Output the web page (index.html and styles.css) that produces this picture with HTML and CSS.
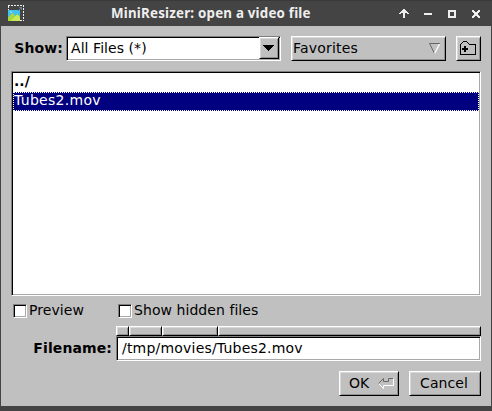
FILE: index.html
```html
<!DOCTYPE html>
<html lang="en">
<head>
<meta charset="utf-8">
<title>MiniResizer: open a video file</title>
<link rel="stylesheet" href="styles.css">
</head>
<body>
<div class="window">
  <header class="titlebar">
    <svg class="app-icon" width="16" height="16" viewBox="0 0 16 16" shape-rendering="crispEdges">
      <path d="M0 .5H16M15.5 0V16M0 .5V5M12 15.5H16" fill="none" stroke="#eee" stroke-dasharray="2 1"/>
      <path fill="#42c0ee" d="M0 5h12v11H0z"/>
      <path fill="#7bd5f5" d="M2 6h2v2H2z"/>
      <path fill="#a9d83c" d="M0 12l4-4 3 3 2-2 3 3v4H0z"/>
      <path fill="#c8ea58" d="M2 16l5-5 2-1 3 3v3z"/>
      <path fill="#607d8b" d="M11 2h3v3h-1V4h-1v1h-1v1h-1V5h1V4h1V3h-1z"/>
    </svg>
    <h1 class="title">MiniResizer: open a video file</h1>
    <svg class="controls" width="82" height="10" viewBox="0 0 82 10" shape-rendering="crispEdges">
      <path fill="#eee" d="M4 0h2v1h1v1h1v1h1v1h1v1H8V4H6v5H4V4H2v1H0V4h1V3h1V2h1V1h1zM25 4h8v2h-8zM49 1h8v8h-8zM73 1h2v1h1v1h2V2h1V1h2v2h-1v1h-1v2h1v1h1v2h-2V8h-1V7h-2v1h-1v1h-2V7h1V6h1V4h-1V3h-1z"/>
      <path fill="#444" d="M51 3h4v4h-4z"/>
    </svg>
  </header>
  <main class="content">
    <div class="toolbar">
      <span class="label show-label">Show:</span>
      <div class="sunken choice">
        <span class="choice-text">All Files (*)</span>
        <span class="drop"><svg width="11" height="6" viewBox="0 0 11 6" shape-rendering="crispEdges"><path d="M0 0h11v1h-1v1H9v1H8v1H7v1H6v1H5V5H4V4H3V3H2V2H1V1H0z"/></svg></span>
      </div>
      <div class="raised favorites">
        <span class="favorites-text">Favorites</span>
        <svg width="11" height="11" viewBox="0 0 11 11"><path d="M11 .5H.5L5.5 10.5" stroke="#666" fill="none"/><path d="M10.5 1L5.6 10.5" stroke="#fff" stroke-width="1.3" fill="none"/></svg>
      </div>
      <div class="raised new-folder">
        <svg width="17" height="15" viewBox="0 0 17 15" shape-rendering="crispEdges"><path d="M0 3h1v11H0zM1 2h1v1H1zM2 1h1v1H2zM3 0h4v1H3zM7 1h1v1H7zM8 2h1v1H8zM9 3h7v11h-1V4H9zM0 13h16v1H0z"/><path d="M4 5h2v2h2v2H6v2H4V9H2V7h2z"/></svg>
      </div>
    </div>
    <div class="sunken list">
      <div class="row parent">../</div>
      <div class="row selected">Tubes2.mov</div>
    </div>
    <div class="options">
      <div class="option preview"><span class="sunken box"></span>Preview</div>
      <div class="option"><span class="sunken box"></span>Show hidden files</div>
    </div>
    <div class="file-row">
      <span class="label file-label">Filename:</span>
      <div class="file-field">
        <div class="crumbs"><i class="crumb root"></i><i class="crumb tmp"></i><i class="crumb movies"></i><i class="crumb rest"></i></div>
        <div class="sunken filename">/tmp/movies/Tubes2.mov</div>
      </div>
    </div>
    <div class="actions">
      <div class="raised button ok">OK
        <svg width="17" height="12" viewBox="0 0 17 12" fill="none"><path d="M.5 5.5L5.5 10.5V7.5H15.5V.5" stroke="#fff"/><path d="M.5 5.5L5.5 .5V3.5H10.5V.5H15" stroke="#666"/></svg>
      </div>
      <div class="raised button cancel">Cancel</div>
    </div>
  </main>
</div>
</body>
</html>
```
FILE: styles.css
```css
* { box-sizing: border-box; }
body { margin: 0; font: 14px/16px "DejaVu Sans", sans-serif; color: #000; }
svg { display: block; flex: none; }
.window { width: 492px; height: 411px; background: #444; padding: 0 1px 5px; border-top: 1px solid #3a3a3a; }
.titlebar { height: 25px; display: flex; align-items: flex-start; padding: 4px 6px 0 7px; }
.title { margin: -1px 0 0 87px; font: bold 13.33px/18px "Noto Sans", sans-serif; letter-spacing: .21px; color: #eee; white-space: nowrap; width: 201px; }
.controls { margin: 4px 0 0 87px; }
.content { height: 380px; background: #c0c0c0; padding: 10px 10px 0; }
.label { font-weight: bold; text-align: right; letter-spacing: .1px; }

.sunken { background: #fff; border: 1px solid; border-color: #808080 #fff #fff #808080; box-shadow: inset 1px 1px #000, inset -1px -1px #a8a8a8; }
.raised { background: #c0c0c0; border: 1px solid; border-color: #fff #000 #000 #fff; box-shadow: inset 1px 1px #d8d8d8, inset -1px -1px #909090; }

.toolbar { display: flex; height: 25px; align-items: center; }
.show-label { width: 52px; margin-right: 3px; padding-bottom: 2px; }
.choice { width: 215px; height: 25px; display: flex; justify-content: space-between; padding: 0 1px 1px 4px; }
.choice-text { line-height: 22px; letter-spacing: .06px; }
.drop { width: 20px; height: 22px; background: #c0c0c0; border: 1px solid; border-color: #fff #000 #000 #fff; box-shadow: inset 1px 1px #d8d8d8, inset -1px -1px #909090; display: flex; align-items: center; padding-left: 3px; }
.favorites { width: 155px; height: 25px; margin: 0 10px; display: flex; justify-content: space-between; align-items: center; padding: 0 5px 0 1px; }
.favorites-text { padding-bottom: 2px; letter-spacing: .2px; }
.new-folder { width: 25px; height: 25px; padding: 4px 0 0 3px; }

.list { height: 225px; margin-top: 10px; padding: 1px; }
.row { height: 19px; line-height: 17px; padding-left: 1px; }
.parent { font-weight: bold; }
.selected { background: #000080; color: #fff; border: 1px dotted #fff; padding-left: 0; line-height: 15px; letter-spacing: .3px; }

.options { display: flex; height: 14px; margin-top: 8px; padding-left: 2px; }
.option { display: flex; gap: 2px; line-height: 13px; letter-spacing: .06px; }
.preview { width: 105px; }
.box { width: 14px; height: 14px; }

.file-row { display: flex; margin-top: 8px; }
.file-label { width: 102px; margin: 14px 3px 0 0; padding-right: 1px; }
.file-field { width: 365px; }
.crumbs { display: flex; height: 10px; }
.crumb { border: 1px solid; border-color: #fff #000 #000 #fff; box-shadow: inset 1px 1px #d8d8d8, inset -1px -1px #909090; }
.root { width: 13px; }
.tmp { width: 33px; }
.movies { width: 56px; }
.rest { flex: 1; }
.filename { height: 25px; padding-left: 5px; line-height: 23px; letter-spacing: .2px; }

.actions { display: flex; justify-content: flex-end; gap: 10px; margin-top: 10px; }
.button { height: 25px; line-height: 23px; }
.ok { width: 60px; padding-left: 9px; display: flex; gap: 9px; }
.ok svg { margin-top: 6px; }
.cancel { width: 72px; padding-left: 10px; letter-spacing: .1px; }
```
